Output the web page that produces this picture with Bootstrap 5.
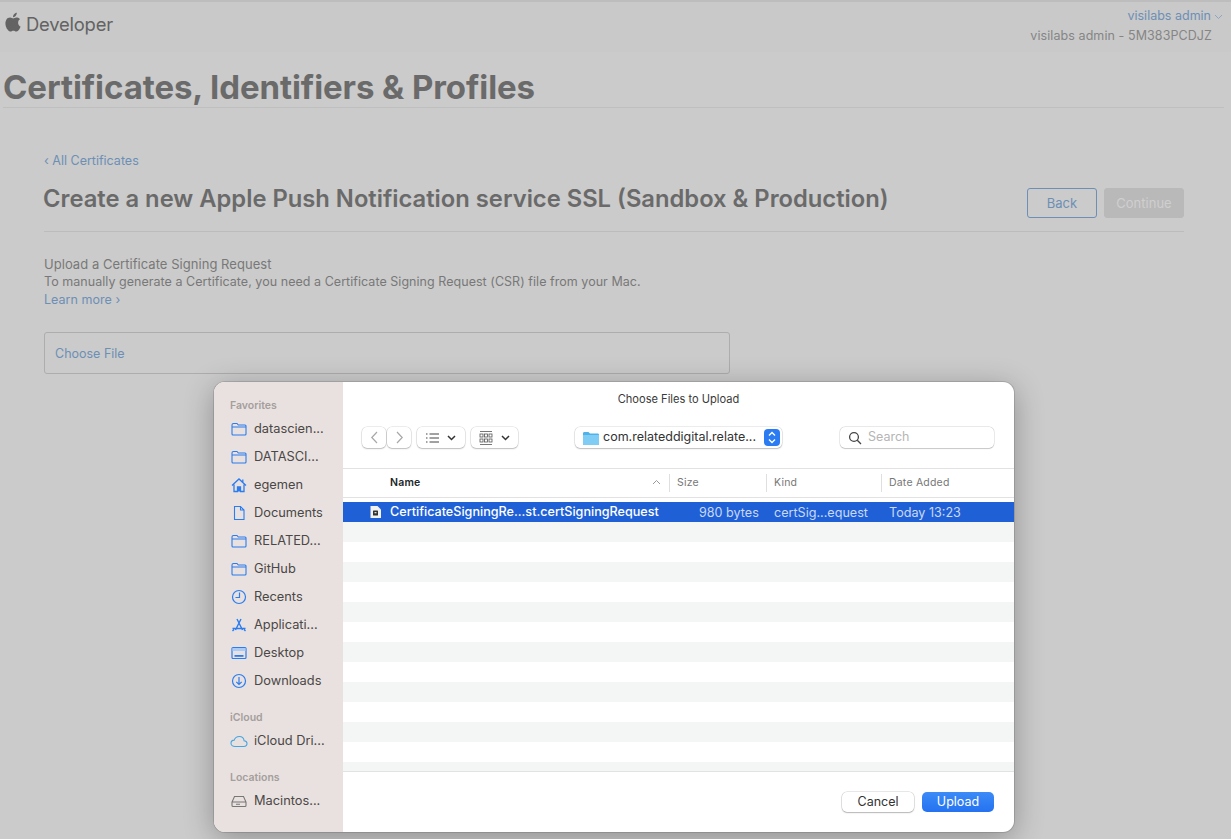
<!DOCTYPE html>
<html lang="en">
<head>
  <meta charset="UTF-8" />
  <meta name="viewport" content="width=device-width, initial-scale=1.0" />
  <title>Certificates, Identifiers &amp; Profiles</title>
  <link href="https://cdn.jsdelivr.net/npm/bootstrap@5.3.2/dist/css/bootstrap.min.css" rel="stylesheet">
  <style>
    html, body { height: 100%; overflow: hidden; }
    body {
      background: #cbcbcb;
      font-family: Inter, "Liberation Sans", sans-serif;
      font-size: 13px;
      color: #6b6b6b;
      position: relative;
    }
    a { text-decoration: none; color: #6d8fb5; }
    .top-line { height: 2px; background: #bdbdbd; }
    .dev-head { height: 50px; padding: 8px 18px 0 3px; background: #c9c9c9; }
    .dev-logo { font-size: 18.4px; color: #636363; line-height: 28px; letter-spacing: -.2px; }
    .dev-logo svg { margin-bottom: 4px; }
    .dev-user { font-size: 12.5px; line-height: 20px; color: #858585; text-align: right; margin-top: -4px; }
    .dev-user a { margin-right: -10px; display: block; }
    .dev-user a svg { margin-left: 3px; }
    .team-name { padding-right: 1px; letter-spacing: .08px; }
    .page-title {
      font-size: 33px; font-weight: 700; color: #6a6a6a; margin: 16px 7px 0 3px; line-height: 38px;
      height: 40px; border-bottom: 1px solid #bfbfbf; letter-spacing: -.08px;
    }
    .cert-body { padding: 44px 47px 0 44px; }
    .back-link { line-height: 18px; font-size: 12.5px; }
    .cert-head { border-bottom: 1px solid #bcbcbc; height: 62px; padding-top: 10px; }
    .cert-head h2 { font-size: 23.75px; font-weight: 600; color: #6a6a6a; margin: 4px 0 0 -1px; line-height: 30px; }
    .head-btns { margin-top: 8px; gap: 7px; }
    .btn-back, .btn-cont { height: 30px; font-size: 13px; padding: 0; border-radius: 3px; line-height: 28px; }
    .btn-back { width: 70px; border: 1px solid #6d8fb5; color: #6d8fb5; background: transparent; }
    .btn-cont { width: 80px; background: #b9b9b9; color: #cfcfcf; border: 1px solid #b9b9b9; }
    .upload-info { margin-top: 23px; line-height: 18px; font-size: 12.5px; color: #787878; letter-spacing: .04px; }
    .upload-label { font-size: 13px; }
    .file-box {
      width: 686px; height: 42px; margin-top: 23px; border: 1px solid #adadad; border-radius: 3px;
      padding: 0 10px; line-height: 41px; font-size: 12.5px;
    }

    .file-dialog {
      position: absolute; left: 214px; top: 382px; width: 800px; height: 450px;
      border-radius: 11px; overflow: hidden; background: #fff; color: #333;
      box-shadow: 0 0 0 1px rgba(0,0,0,.12), 0 6px 30px rgba(0,0,0,.3);
      font-size: 13px;
    }
    .dlg-side { width: 129px; background: #e9e1df; padding-top: 15px; flex: none; }
    .side-label { font-size: 10.5px; font-weight: 600; color: #a49e9d; padding-left: 16px; line-height: 18px; }
    .side-item { height: 28px; padding-left: 17px; color: #4a4746; font-size: 12.8px; }
    .side-item svg { width: 18px; height: 18px; margin-right: 6px; margin-left: -1px; flex: none; }
    .side-gap { height: 14px; }
    .dlg-main { width: 671px; }
    .dlg-title { font-size: 11.1px; text-align: center; line-height: 14px; padding-top: 10px; height: 24px; color: #3a3a3a; }
    .dlg-tools { height: 62px; padding: 21px 20px 0 19px; }
    .tool-btn {
      height: 21px; background: #fff; border-radius: 5px; border: 0;
      box-shadow: 0 0 0 .5px rgba(0,0,0,.14), 0 1px 1.5px rgba(0,0,0,.2);
    }
    .nav-arrow { width: 24px; color: #a8a8a8; }
    .nav-arrow + .nav-arrow { margin-left: 1px; }
    .view-one { width: 48px; margin-left: 6px; }
    .view-two { width: 47px; margin-left: 6px; }
    .path-btn { width: 207px; margin-left: 57px; padding-left: 8px; font-size: 12.5px; color: #333; white-space: nowrap; }
    .path-stepper {
      width: 16px; height: 17px; border-radius: 4px; background: #2b7bf2; margin-left: auto; margin-right: 2px;
    }
    .search-box { width: 154px; margin-left: auto; padding-left: 8px; color: #b5b5b5; font-size: 12.5px; box-shadow: 0 0 0 .5px rgba(0,0,0,.14), 0 .5px 1px rgba(0,0,0,.16); }
    .search-box svg { margin-right: 6px; }
    .tbl-head {
      height: 30px; border-top: 1px solid #e2e2e2; border-bottom: 1px solid #e2e2e2;
      font-size: 10.5px; color: #777; line-height: 28px; letter-spacing: .2px;
    }
    .col-name { width: 326px; padding-left: 47px; flex: none; position: relative; }
    .col-size { width: 97px; padding-left: 7px; flex: none; }
    .col-kind { width: 115px; padding-left: 7px; flex: none; }
    .col-date { padding-left: 7px; flex: 1; }
    .col-sep { border-left: 1px solid #dfdfdf; height: 18px; margin-top: 5px; line-height: 18px; }
    .sort-mark { position: absolute; right: 8px; top: 10px; }
    .tbl-rows { height: 274px; margin-top: 4px; overflow: hidden; border-bottom: 1px solid #e2e2e2; }
    .file-row { height: 20px; flex: none; }
    .file-row:nth-child(even) { background: #f4f5f5; }
    .file-row.on { background: #2060d6; color: #c9d8f4; line-height: 21px; font-size: 12.6px; }
    .on .row-name { width: 326px; padding-left: 26px; color: #fff; font-weight: 500; flex: none; }
    .on .row-size { width: 105px; padding-left: 30px; flex: none; white-space: nowrap; }
    .on .row-kind { width: 115px; flex: none; white-space: nowrap; }
    .on .row-date { white-space: nowrap; }
    .dlg-foot { padding: 20px 20px 0 0; height: 60px; }
    .mac-btn { height: 20px; border: 0; font-size: 12.5px; padding: 0; line-height: 20px; border-radius: 5px; }
    .mac-cancel { width: 72px; background: #fff; color: #333; box-shadow: 0 0 0 .5px rgba(0,0,0,.18), 0 1px 1.5px rgba(0,0,0,.22); }
    .mac-ok { width: 72px; margin-left: 8px; background: linear-gradient(#3c8bf7, #2472f0); color: #fff; }
  </style>
</head>
<body>
  <div class="top-line"></div>
  <div class="dev-head d-flex justify-content-between">
    <div class="dev-logo d-flex align-items-center align-self-start">
      <svg width="19" height="22" viewBox="0 0 17 20" class="me-1" fill="#636363">
        <path d="M13.6 10.6c0-2 1.6-3 1.7-3-1-1.400-2.400-1.600-3-1.600-1.300-.1-2.500.8-3.100.8-.7 0-1.700-.8-2.800-.8C4.900 6 3.500 6.800 2.800 8.100c-1.500 2.600-.4 6.400 1 8.500.7 1 1.600 2.200 2.700 2.100 1.100 0 1.500-.7 2.800-.7s1.700.7 2.800.7c1.200 0 1.900-1 2.600-2.100.8-1.200 1.200-2.400 1.200-2.400s-2.300-.9-2.300-3.600zM11.500 4.400c.6-.7 1-1.700.9-2.700-.9 0-1.900.6-2.500 1.300-.5.6-1 1.600-.9 2.600 1 .1 1.900-.5 2.500-1.200z"/>
      </svg>
      <span>Developer</span>
    </div>
    <div class="dev-user">
      <a href="#">visilabs admin<svg width="9" height="6" viewBox="0 0 9 6" fill="none" stroke="#8da6c2"><path d="M1 1l3.500 3.500L8 1"/></svg></a>
      <div class="team-name">visilabs admin - 5M383PCDJZ</div>
    </div>
  </div>
  <h1 class="page-title">Certificates, Identifiers &amp; Profiles</h1>

  <div class="cert-body">
    <a href="#" class="back-link d-block">‹ All Certificates</a>
    <div class="cert-head d-flex justify-content-between align-items-start">
      <h2>Create a new Apple Push Notification service SSL (Sandbox &amp; Production)</h2>
      <div class="head-btns d-flex">
        <button class="btn btn-back">Back</button>
        <button class="btn btn-cont">Continue</button>
      </div>
    </div>
    <div class="upload-info">
      <div class="upload-label">Upload a Certificate Signing Request</div>
      <div>To manually generate a Certificate, you need a Certificate Signing Request (CSR) file from your Mac.</div>
      <a href="#">Learn more ›</a>
    </div>
    <div class="file-box"><a href="#">Choose File</a></div>
  </div>

  <div class="file-dialog d-flex">
    <div class="dlg-side">
      <div class="side-label">Favorites</div>
      <div id="sideFav"></div>
      <div class="side-gap"></div>
      <div class="side-label">iCloud</div>
      <div id="sideCloud"></div>
      <div class="side-gap"></div>
      <div class="side-label">Locations</div>
      <div id="sideLoc"></div>
    </div>
    <div class="dlg-main d-flex flex-column">
      <div class="dlg-title">Choose Files to Upload</div>
      <div class="dlg-tools d-flex align-items-start">
        <div class="tool-btn nav-arrow d-flex align-items-center justify-content-center"><svg width="9" height="13" viewBox="0 0 9 13" fill="none" stroke="#a8a8a8" stroke-width="1.200"><path d="M7 1L1.800 6.500 7 12"/></svg></div>
        <div class="tool-btn nav-arrow d-flex align-items-center justify-content-center"><svg width="9" height="13" viewBox="0 0 9 13" fill="none" stroke="#a8a8a8" stroke-width="1.200"><path d="M2 1l5.200 5.500L2 12"/></svg></div>
        <div class="tool-btn view-one d-flex align-items-center justify-content-center gap-2">
          <svg width="13" height="10" viewBox="0 0 13 10" stroke="#444" fill="none"><path d="M3.500 1H13M3.500 5H13M3.500 9H13M0 1h1.500M0 5h1.500M0 9h1.500"/></svg>
          <svg width="9" height="6" viewBox="0 0 9 6" fill="none" stroke="#333" stroke-width="1.500"><path d="M1 1l3.500 3.500L8 1"/></svg>
        </div>
        <div class="tool-btn view-two d-flex align-items-center justify-content-center gap-2">
          <svg width="14" height="14" viewBox="0 0 14 14" stroke="#555" fill="none" stroke-width=".8"><path d="M1 .5h12M1 13.500h12"/><rect x="1" y="3" width="3" height="3"/><rect x="5.500" y="3" width="3" height="3"/><rect x="10" y="3" width="3" height="3"/><rect x="1" y="8" width="3" height="3"/><rect x="5.500" y="8" width="3" height="3"/><rect x="10" y="8" width="3" height="3"/></svg>
          <svg width="9" height="6" viewBox="0 0 9 6" fill="none" stroke="#333" stroke-width="1.500"><path d="M1 1l3.500 3.500L8 1"/></svg>
        </div>
        <div class="tool-btn path-btn d-flex align-items-center">
          <svg width="16" height="14" viewBox="0 0 16 14" class="me-1 flex-none"><path d="M0 2.500C0 1.500.6 1 1.500 1h4L7 2.500h7.500c1 0 1.500.5 1.500 1.500v8.500c0 1-.5 1.500-1.500 1.500h-13C.5 14 0 13.500 0 12.500z" fill="#4fb3ea"/><path d="M0 4h16v8.500c0 1-.5 1.500-1.500 1.500h-13C.5 14 0 13.500 0 12.500z" fill="#7fcdf5"/></svg>
          <span>com.relateddigital.relate...</span>
          <div class="path-stepper d-flex align-items-center justify-content-center">
            <svg width="8" height="13" viewBox="0 0 8 13" fill="none" stroke="#fff" stroke-width="1.400"><path d="M1 4.500l3-3 3 3M1 8.500l3 3 3-3"/></svg>
          </div>
        </div>
        <div class="tool-btn search-box d-flex align-items-center">
          <svg width="14" height="14" viewBox="0 0 14 14" fill="none" stroke="#444" stroke-width="1.300"><circle cx="6" cy="6" r="4.400"/><path d="M9.300 9.300L13 13"/></svg>
          <span>Search</span>
        </div>
      </div>
      <div class="tbl-head d-flex">
        <div class="col-name fw-semibold text-dark">Name
          <svg class="sort-mark" width="9" height="6" viewBox="0 0 9 6" fill="none" stroke="#999"><path d="M1 5l3.500-3.500L8 5"/></svg>
        </div>
        <div class="col-size col-sep">Size</div>
        <div class="col-kind col-sep">Kind</div>
        <div class="col-date col-sep">Date Added</div>
      </div>
      <div class="tbl-rows d-flex flex-column" id="rows">
        <div class="file-row on d-flex">
          <div class="row-name d-flex align-items-center">
            <svg width="13" height="14" viewBox="0 0 13 14" class="me-2 flex-none"><path d="M1.500 1h7L12 4.500v8.500h-10.500z" fill="#f2f2f2"/><rect x="4" y="5.500" width="5" height="5" rx=".6" fill="#333"/><rect x="5.500" y="7" width="2" height="1.300" fill="#ddd"/></svg>
            <span class="text-nowrap">CertificateSigningRe...st.certSigningRequest</span>
          </div>
          <div class="row-size">980 bytes</div>
          <div class="row-kind">certSig...equest</div>
          <div class="row-date">Today 13:23</div>
        </div>
      </div>
      <div class="dlg-foot d-flex justify-content-end align-items-start">
        <button class="btn mac-btn mac-cancel">Cancel</button>
        <button class="btn mac-btn mac-ok">Upload</button>
      </div>
    </div>
  </div>

  <script src="https://cdn.jsdelivr.net/npm/bootstrap@5.3.2/dist/js/bootstrap.bundle.min.js"></script>
  <script>
    // sidebar icons, all 18x18 stroked except where noted
    const blue = "#2a7cf0";
    const folder = `<path d="M2 5c0-1 .5-1.500 1.500-1.500h3.500l1.300 1.500H15c.7 0 1 .4 1 1v8c0 .7-.4 1-1 1H3c-.6 0-1-.4-1-1z M2 7h14" fill="none" stroke="${blue}" stroke-width="1.100"/>`;
    const icons = {
      folder,
      home: `<path d="M2 9.500L9 3l7 6.500M4 8.500V15.500h3.500V11h3v4.500H14V8.500M12.800 3.500v2.500" fill="none" stroke="${blue}" stroke-width="1.300"/><rect x="7.500" y="11" width="3" height="4.500" fill="${blue}"/>`,
      doc: `<path d="M4.500 2.500h6l3.500 3.500v9.500h-9.500zM10.500 2.500V6H14" fill="none" stroke="${blue}" stroke-width="1.100"/>`,
      clock: `<circle cx="9" cy="9" r="6.500" fill="none" stroke="${blue}" stroke-width="1.200"/><path d="M9.500 4.500v5H5.500" fill="none" stroke="${blue}" stroke-width="1.200"/>`,
      apps: `<path d="M7 3l5.500 11M11 3L5.500 14M2.500 12.500h13M2.500 15l1.500-1.500M15.500 15L14 13.500" fill="none" stroke="${blue}" stroke-width="1.400"/>`,
      desktop: `<rect x="2" y="3.500" width="14" height="11" rx="1" fill="none" stroke="${blue}" stroke-width="1.200"/><rect x="2.500" y="4" width="13" height="3" fill="#a8cbf8"/><rect x="4.500" y="11" width="9" height="1.800" fill="${blue}"/>`,
      down: `<circle cx="9" cy="9" r="6.500" fill="none" stroke="${blue}" stroke-width="1.200"/><path d="M9 5v7.500M6.300 9.800L9 12.500l2.700-2.700" fill="none" stroke="${blue}" stroke-width="1.200"/>`,
      cloud: `<path d="M5 14.500c-2.200 0-4-1.300-4-3.300 0-1.800 1.400-3.100 3.200-3.100C5 6 7 4.500 9.300 4.500c2.700 0 4.600 1.900 4.800 4.300 1.700.2 2.900 1.300 2.900 2.800 0 1.700-1.400 2.900-3.200 2.900z" fill="none" stroke="#45a6e0" stroke-width="1.100"/>`,
      disk: `<path d="M4.500 4.500h9L16 10v3.500c0 .7-.4 1-1 1H3c-.6 0-1-.3-1-1V10zM2 10h14" fill="none" stroke="#777" stroke-width="1.100"/><path d="M6 12.300h4" stroke="#777" stroke-width="1.100"/>`
    };

    function sideItems(targetId, items) {
      document.getElementById(targetId).innerHTML = items.map(([icon, label]) =>
        `<div class="side-item d-flex align-items-center"><svg viewBox="0 0 18 18">${icons[icon]}</svg><span>${label}</span></div>`
      ).join("");
    }

    sideItems("sideFav", [
      ["folder", "datascien..."], ["folder", "DATASCI..."], ["home", "egemen"],
      ["doc", "Documents"], ["folder", "RELATED..."], ["folder", "GitHub"],
      ["clock", "Recents"], ["apps", "Applicati..."], ["desktop", "Desktop"], ["down", "Downloads"]
    ]);
    sideItems("sideCloud", [["cloud", "iCloud Dri..."]]);
    sideItems("sideLoc", [["disk", "Macintos..."]]);

    // empty striped rows under the selected file
    const rows = document.getElementById("rows");
    for (let i = 0; i < 13; i++) {
      const r = document.createElement("div");
      r.className = "file-row";
      rows.appendChild(r);
    }
  </script>
</body>
</html>
